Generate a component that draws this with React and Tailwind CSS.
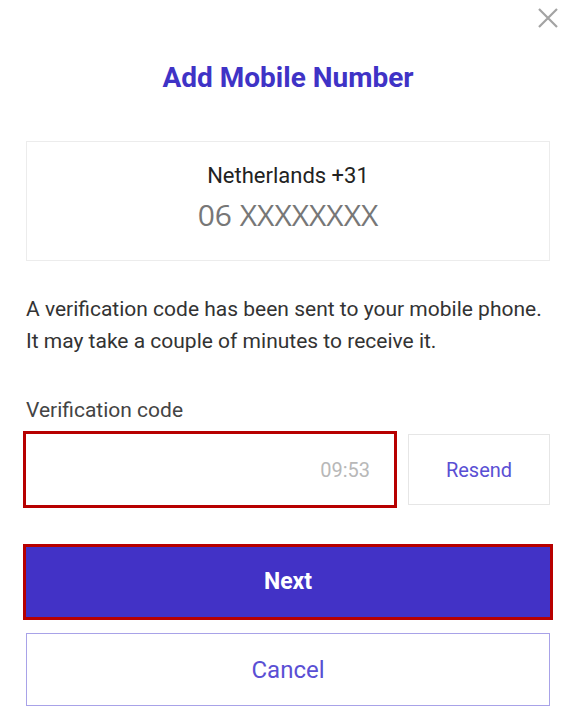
import { useState } from 'react';

export default function App() {
  const [code, setCode] = useState('');

  return (
    <div className="min-h-screen bg-white font-['Roboto',sans-serif] pl-[26px] pr-[24px]">
      {/* close */}
      <div className="flex justify-end pt-[7px] -mr-[9px]">
        <button className="w-[22px] h-[22px] flex items-center justify-center text-[#a3a3a3]">
          <svg width="20" height="20" viewBox="0 0 20 20" fill="none" stroke="currentColor" strokeWidth="2.2">
            <path d="M1 1 L19 19 M19 1 L1 19" />
          </svg>
        </button>
      </div>

      <h1 className="mt-[31px] text-center text-[28px] font-bold text-[#3f33c6] leading-[36px]">
        Add Mobile Number
      </h1>

      {/* number card */}
      <div className="mt-[45px] h-[120px] border border-[#ececec] flex flex-col items-center pt-[20px]">
        <div className="text-[22px] text-[#222] leading-[28px]">Netherlands +31</div>
        <div className="mt-[7px] text-[30px] text-[#777] leading-[36px] font-['Open_Sans',sans-serif]">
          06 XXXXXXXX
        </div>
      </div>

      <p className="mt-[32px] text-[21px] leading-[32px] text-[#333]">
        A verification code has been sent to your mobile phone.
        <br />
        It may take a couple of minutes to receive it.
      </p>

      <label className="block mt-[41px] text-[21px] leading-[24px] text-[#444]">
        Verification code
      </label>

      <div className="mt-[12px] flex gap-[14px]">
        <div className="relative w-[368px] h-[71px] outline-[3px] outline-solid outline-[#b70000]">
          <input
            value={code}
            onChange={(e) => setCode(e.target.value)}
            className="w-full h-full px-4 text-[20px] outline-none bg-white"
          />
          <span className="absolute right-[24px] top-1/2 -translate-y-1/2 text-[20px] text-[#b8b8b8]">
            09:53
          </span>
        </div>
        <button className="flex-1 h-[71px] border border-[#e6e6e6] text-[20px] text-[#5a4fd4]">
          Resend
        </button>
      </div>

      <button className="mt-[42px] w-full h-[70px] bg-[#4232c6] outline-[3px] outline-solid outline-[#b70000] text-white text-[23px] font-bold">
        Next
      </button>

      <button className="mt-[16px] w-full h-[73px] border border-[#a8a2e8] text-[#5a4fd4] text-[24px]">
        Cancel
      </button>
    </div>
  );
}
